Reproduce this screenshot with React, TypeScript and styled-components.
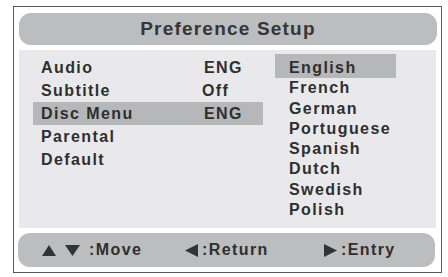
import React from 'react'
import styled, { createGlobalStyle } from 'styled-components'

const GlobalStyle = createGlobalStyle`
  html, body {
    margin: 0;
    padding: 0;
    background: #ffffff;
  }
  body {
    font-family: "Liberation Sans", Arial, Helvetica, sans-serif;
    font-weight: bold;
    color: #2f2f2f;
  }
`

const Page = styled.div`
  padding: 6px 0 0 13px;
`

const Frame = styled.div`
  width: 429px;
  height: 267px;
  border: 1px solid #5a5a5a;
  padding: 6px 3px 0 5px;
  box-sizing: border-box;
  display: flex;
  flex-direction: column;
  gap: 5px;
`

const TitleBar = styled.div`
  width: 418px;
  height: 32px;
  border-radius: 12px;
  background: #bcbdbf;
  display: flex;
  align-items: center;
  justify-content: center;
  font-size: 19px;
  letter-spacing: 1.2px;
  color: #363636;
`

const Panel = styled.div`
  width: 417px;
  height: 178px;
  background: #e9e9eb;
  display: flex;
  padding: 6px 0 0 14px;
  box-sizing: border-box;
  gap: 12px;
`

const SettingList = styled.div`
  display: flex;
  flex-direction: column;
  width: 230px;
`

const SettingRow = styled.div<{ $active?: boolean }>`
  display: flex;
  height: 23px;
  line-height: 23px;
  padding-left: 8px;
  font-size: 16px;
  letter-spacing: 1.4px;
  background: ${(p) => (p.$active ? '#b6b7b9' : 'transparent')};
`

const Label = styled.span`
  width: 163px;
`

const Value = styled.span<{ $shift?: number }>`
  margin-left: ${(p) => p.$shift ?? 0}px;
`

const LangList = styled.div`
  display: flex;
  flex-direction: column;
  width: 121px;
  padding-top: 2px;
`

const LangItem = styled.div<{ $active?: boolean }>`
  line-height: 20.3px;
  font-size: 16px;
  letter-spacing: 1.4px;
  padding-left: 14px;
  ${(p) =>
    p.$active &&
    `
    background: #b6b7b9;
    padding-top: 4px;
    margin-top: -4px;
  `}
`

const Footer = styled.div`
  width: 417px;
  height: 34px;
  margin-left: -1px;
  border-radius: 12px;
  background: #bcbdbf;
  display: grid;
  grid-template-columns: 143px 139px 1fr;
  align-items: center;
  padding-left: 24px;
  box-sizing: border-box;
  font-size: 16px;
  letter-spacing: 1.4px;
`

const Hint = styled.div<{ $gap: number }>`
  display: flex;
  align-items: center;
  gap: ${(p) => p.$gap}px;
`

const Arrow = ({ dir }: { dir: 'up' | 'down' | 'left' | 'right' }) => {
  const shapes = {
    up: { w: 14, h: 11, pts: '7,0 14,11 0,11' },
    down: { w: 15, h: 11, pts: '0,0 15,0 7.5,11' },
    left: { w: 13, h: 13, pts: '13,0 13,13 0,6.5' },
    right: { w: 13, h: 13, pts: '0,0 13,6.5 0,13' },
  }
  const s = shapes[dir]
  return (
    <svg width={s.w} height={s.h} viewBox={`0 0 ${s.w} ${s.h}`}>
      <polygon points={s.pts} fill="#333333" />
    </svg>
  )
}

const settings = [
  { label: 'Audio', value: 'ENG', shift: 0 },
  { label: 'Subtitle', value: 'Off', shift: -2 },
  { label: 'Disc Menu', value: 'ENG', shift: 0, active: true },
  { label: 'Parental', value: '' },
  { label: 'Default', value: '' },
]

const languages = ['English', 'French', 'German', 'Portuguese', 'Spanish', 'Dutch', 'Swedish', 'Polish']

export default function App() {
  return (
    <Page>
      <GlobalStyle />
      <Frame>
        <TitleBar>Preference Setup</TitleBar>
        <Panel>
          <SettingList>
            {settings.map((s) => (
              <SettingRow key={s.label} $active={s.active}>
                <Label>{s.label}</Label>
                <Value $shift={s.shift}>{s.value}</Value>
              </SettingRow>
            ))}
          </SettingList>
          <LangList>
            {languages.map((l, i) => (
              <LangItem key={l} $active={i === 0}>
                {l}
              </LangItem>
            ))}
          </LangList>
        </Panel>
        <Footer>
          <Hint $gap={9}>
            <Arrow dir="up" />
            <Arrow dir="down" />
            <span>:Move</span>
          </Hint>
          <Hint $gap={4}>
            <Arrow dir="left" />
            <span>:Return</span>
          </Hint>
          <Hint $gap={4}>
            <Arrow dir="right" />
            <span>:Entry</span>
          </Hint>
        </Footer>
      </Frame>
    </Page>
  )
}
